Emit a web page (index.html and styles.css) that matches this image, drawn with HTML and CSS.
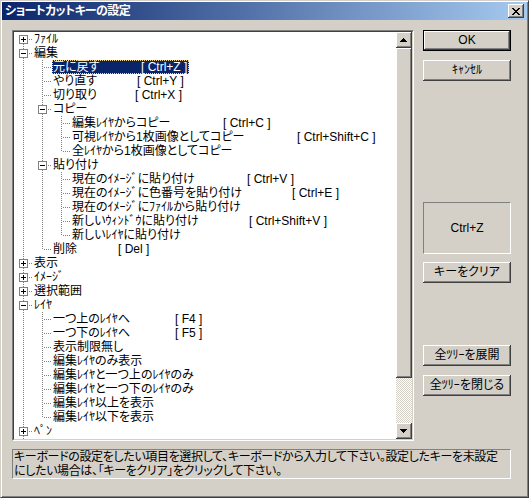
FILE: index.html
```html
<!DOCTYPE html>
<html lang="ja">
<head>
<meta charset="utf-8">
<title>ショートカットキーの設定</title>
<link rel="stylesheet" href="styles.css">
</head>
<body>
<div class="window">
  <div class="caption">
    <span class="title">ショートカットキーの設定</span>
    <span class="close">
      <svg width="8" height="7" viewBox="0 0 8 7" shape-rendering="crispEdges"><path d="M0 0h2v1H0zM6 0h2v1H6zM1 1h2v1H1zM5 1h2v1H5zM2 2h4v1H2zM3 3h2v1H3zM2 4h4v1H2zM1 5h2v1H1zM5 5h2v1H5zM0 6h2v1H0zM6 6h2v1H6z" fill="#000"/></svg>
    </span>
  </div>
  <div class="client">
    <div class="main">
      <div class="treebox">
        <div class="treein">
          <div class="tree">
            <div class="row"><span class="c first"><span class="box plus"></span></span><span class="t">ﾌｧｲﾙ</span></div>
            <div class="row"><span class="c mid"><span class="box"></span></span><span class="t">編集</span></div>
            <div class="row"><span class="g l"></span><span class="c mid"></span><span class="t sel"><span class="nm w88">元に戻す</span><span class="k">[ Ctrl+Z ]</span></span></div>
            <div class="row"><span class="g l"></span><span class="c mid"></span><span class="t"><span class="nm w84">やり直す</span><span class="k">[ Ctrl+Y ]</span></span></div>
            <div class="row"><span class="g l"></span><span class="c mid"></span><span class="t"><span class="nm w82">切り取り</span><span class="k">[ Ctrl+X ]</span></span></div>
            <div class="row"><span class="g l"></span><span class="c mid"><span class="box"></span></span><span class="t">コピー</span></div>
            <div class="row"><span class="g l"></span><span class="g l"></span><span class="c mid"></span><span class="t"><span class="nm w151">編集ﾚｲﾔからコピー</span><span class="k">[ Ctrl+C ]</span></span></div>
            <div class="row"><span class="g l"></span><span class="g l"></span><span class="c mid"></span><span class="t"><span class="nm w225">可視ﾚｲﾔから1枚画像としてコピー</span><span class="k">[ Ctrl+Shift+C ]</span></span></div>
            <div class="row"><span class="g l"></span><span class="g l"></span><span class="c end"></span><span class="t">全ﾚｲﾔから1枚画像としてコピー</span></div>
            <div class="row"><span class="g l"></span><span class="c mid"><span class="box"></span></span><span class="t">貼り付け</span></div>
            <div class="row"><span class="g l"></span><span class="g l"></span><span class="c mid"></span><span class="t"><span class="nm w175">現在のｲﾒｰｼﾞに貼り付け</span><span class="k">[ Ctrl+V ]</span></span></div>
            <div class="row"><span class="g l"></span><span class="g l"></span><span class="c mid"></span><span class="t"><span class="nm w220">現在のｲﾒｰｼﾞに色番号を貼り付け</span><span class="k">[ Ctrl+E ]</span></span></div>
            <div class="row"><span class="g l"></span><span class="g l"></span><span class="c mid"></span><span class="t">現在のｲﾒｰｼﾞにﾌｧｲﾙから貼り付け</span></div>
            <div class="row"><span class="g l"></span><span class="g l"></span><span class="c mid"></span><span class="t"><span class="nm w177">新しいｳｨﾝﾄﾞｳに貼り付け</span><span class="k">[ Ctrl+Shift+V ]</span></span></div>
            <div class="row"><span class="g l"></span><span class="g l"></span><span class="c end"></span><span class="t">新しいﾚｲﾔに貼り付け</span></div>
            <div class="row"><span class="g l"></span><span class="c end"></span><span class="t"><span class="nm w65">削除</span><span class="k">[ Del ]</span></span></div>
            <div class="row"><span class="c mid"><span class="box plus"></span></span><span class="t">表示</span></div>
            <div class="row"><span class="c mid"><span class="box plus"></span></span><span class="t">ｲﾒｰｼﾞ</span></div>
            <div class="row"><span class="c mid"><span class="box plus"></span></span><span class="t">選択範囲</span></div>
            <div class="row"><span class="c mid"><span class="box"></span></span><span class="t">ﾚｲﾔ</span></div>
            <div class="row"><span class="g l"></span><span class="c mid"></span><span class="t"><span class="nm w122">一つ上のﾚｲﾔへ</span><span class="k">[ F4 ]</span></span></div>
            <div class="row"><span class="g l"></span><span class="c mid"></span><span class="t"><span class="nm w122">一つ下のﾚｲﾔへ</span><span class="k">[ F5 ]</span></span></div>
            <div class="row"><span class="g l"></span><span class="c mid"></span><span class="t">表示制限無し</span></div>
            <div class="row"><span class="g l"></span><span class="c mid"></span><span class="t">編集ﾚｲﾔのみ表示</span></div>
            <div class="row"><span class="g l"></span><span class="c mid"></span><span class="t">編集ﾚｲﾔと一つ上のﾚｲﾔのみ</span></div>
            <div class="row"><span class="g l"></span><span class="c mid"></span><span class="t">編集ﾚｲﾔと一つ下のﾚｲﾔのみ</span></div>
            <div class="row"><span class="g l"></span><span class="c mid"></span><span class="t">編集ﾚｲﾔ以上を表示</span></div>
            <div class="row"><span class="g l"></span><span class="c end"></span><span class="t">編集ﾚｲﾔ以下を表示</span></div>
            <div class="row"><span class="c mid"><span class="box plus"></span></span><span class="t">ﾍﾟﾝ</span></div>
            <div class="row"><span class="c mid"><span class="box plus"></span></span></div>
          </div>
          <div class="vscroll">
            <span class="sbtn"><svg width="7" height="4" viewBox="0 0 7 4" shape-rendering="crispEdges"><path d="M3 0h1v1H3zM2 1h3v1H2zM1 2h5v1H1zM0 3h7v1H0z" fill="#000"/></svg></span>
            <span class="thumb"></span>
            <span class="track"></span>
            <span class="sbtn"><svg width="7" height="4" viewBox="0 0 7 4" shape-rendering="crispEdges"><path d="M0 0h7v1H0zM1 1h5v1H1zM2 2h3v1H2zM3 3h1v1H3z" fill="#000"/></svg></span>
          </div>
        </div>
      </div>
      <div class="side">
        <button class="btn default">OK</button>
        <button class="btn sp-cancel">ｷｬﾝｾﾙ</button>
        <div class="keybox">Ctrl+Z</div>
        <button class="btn sp-clear">キーをクリア</button>
        <button class="btn sp-expand">全ﾂﾘｰを展開</button>
        <button class="btn sp-collapse">全ﾂﾘｰを閉じる</button>
      </div>
    </div>
    <div class="desc">キーボードの設定をしたい項目を選択して、キーボードから入力して下さい。設定したキーを未設定<br>にしたい場合は、「キーをクリア」をクリックして下さい。</div>
  </div>
</div>
</body>
</html>
```
FILE: styles.css
```css
html, body {
  margin: 0;
  padding: 0;
}
body {
  background: #d4d0c8;
  font-family: "Liberation Sans", "Noto Sans CJK JP", sans-serif;
  font-size: 12px;
  font-feature-settings: "palt";
  color: #000;
}
.window {
  width: 529px;
  height: 498px;
  box-sizing: border-box;
  border: 1px solid;
  border-color: #d4d0c8 #404040 #404040 #d4d0c8;
  box-shadow: inset 1px 1px #fff, inset -1px -1px #808080;
  padding: 1px;
  display: flex;
  flex-direction: column;
}
.caption {
  height: 18px;
  flex: none;
  background: linear-gradient(to right, #0a246a, #a6caf0);
  display: flex;
  align-items: center;
  padding: 0 3px 0 3px;
}
.title {
  flex: 1;
  color: #fff;
  font-weight: bold;
  line-height: 18px;
  letter-spacing: -0.6px;
  white-space: nowrap;
}
.close {
  width: 16px;
  height: 14px;
  box-sizing: border-box;
  background: #d4d0c8;
  box-shadow: inset -1px -1px #404040, inset 1px 1px #fff, inset -2px -2px #808080;
  display: flex;
  align-items: center;
  justify-content: center;
  padding-right: 1px;
}
.client {
  padding: 10px 0 0 10px;
  display: flex;
  flex-direction: column;
  gap: 8px;
}
.main {
  display: flex;
  gap: 9px;
  align-items: flex-start;
}
.treebox {
  width: 402px;
  height: 411px;
  box-sizing: border-box;
  border: 1px solid;
  border-color: #808080 #fff #fff #808080;
}
.treein {
  height: 100%;
  box-sizing: border-box;
  border: 1px solid;
  border-color: #404040 #d4d0c8 #d4d0c8 #404040;
  background: #fff;
  display: flex;
}
.tree {
  flex: 1;
  overflow: hidden;
}
.row {
  display: flex;
  height: 14px;
  line-height: 14px;
  white-space: nowrap;
}
.g, .c {
  width: 19px;
  flex: none;
  position: relative;
}
.g.l::before, .c::before {
  content: "";
  position: absolute;
  left: 9px;
  width: 1px;
  top: 0;
  bottom: 0;
  background: repeating-linear-gradient(to bottom, #808080 0 1px, transparent 1px 2px);
}
.c.first::before {
  top: 8px;
}
.c.end::before {
  bottom: 6px;
}
.c::after {
  content: "";
  position: absolute;
  left: 10px;
  right: 0;
  top: 7px;
  height: 1px;
  background: repeating-linear-gradient(to right, transparent 0 1px, #808080 1px 2px);
}
.box {
  position: absolute;
  left: 5px;
  top: 3px;
  width: 9px;
  height: 9px;
  box-sizing: border-box;
  border: 1px solid #808080;
  background: #fff;
  z-index: 1;
}
.box::before {
  content: "";
  position: absolute;
  left: 1px;
  top: 3px;
  width: 5px;
  height: 1px;
  background: #000;
}
.box.plus::after {
  content: "";
  position: absolute;
  left: 3px;
  top: 1px;
  width: 1px;
  height: 5px;
  background: #000;
}
.t {
  padding: 0 2px 0 1px;
  height: 14px;
}
.t.sel {
  background: #0a246a;
  color: #fff;
  outline: 1px dotted #f5db95;
  outline-offset: -1px;
}
.nm {
  display: inline-block;
}
.w65 { width: 65px; }
.w82 { width: 82px; }
.w84 { width: 84px; }
.w88 { width: 88px; }
.w122 { width: 122px; }
.w151 { width: 151px; }
.w175 { width: 175px; }
.w177 { width: 177px; }
.w220 { width: 220px; }
.w225 { width: 225px; }
.k {
  white-space: pre;
}
.vscroll {
  width: 16px;
  flex: none;
  display: flex;
  flex-direction: column;
}
.sbtn, .thumb {
  background: #d4d0c8;
  box-shadow: inset -1px -1px #404040, inset 1px 1px #fff, inset -2px -2px #808080;
  box-sizing: border-box;
}
.sbtn {
  height: 16px;
  flex: none;
  display: flex;
  align-items: center;
  justify-content: center;
  padding-right: 1px;
}
.thumb {
  height: 330px;
  flex: none;
}
.track {
  flex: 1;
  background: repeating-conic-gradient(#fff 0 25%, #d4d0c8 0 50%) 0 0 / 2px 2px;
}
.side {
  width: 88px;
  display: flex;
  flex-direction: column;
}
.btn {
  height: 21px;
  width: 88px;
  margin: 0;
  padding: 0;
  border: none;
  background: #d4d0c8;
  box-shadow: inset -1px -1px #404040, inset 1px 1px #fff, inset -2px -2px #808080;
  font: inherit;
  color: #000;
  line-height: 19px;
  text-align: center;
}
.btn.default {
  border: 1px solid #000;
  box-sizing: border-box;
}
.sp-cancel { margin-top: 9px; }
.sp-clear { margin-top: 8px; }
.sp-expand { margin-top: 62px; }
.sp-collapse { margin-top: 9px; }
.keybox {
  margin-top: 121px;
  height: 52px;
  box-sizing: border-box;
  border: 1px solid;
  border-color: #808080 #fff #fff #808080;
  display: flex;
  align-items: center;
  justify-content: center;
}
.desc {
  width: 499px;
  height: 30px;
  box-sizing: border-box;
  border: 1px solid;
  border-color: #808080 #fff #fff #808080;
  padding: 0 1px;
  line-height: 14px;
  letter-spacing: -0.35px;
  white-space: nowrap;
  overflow: hidden;
}
```
